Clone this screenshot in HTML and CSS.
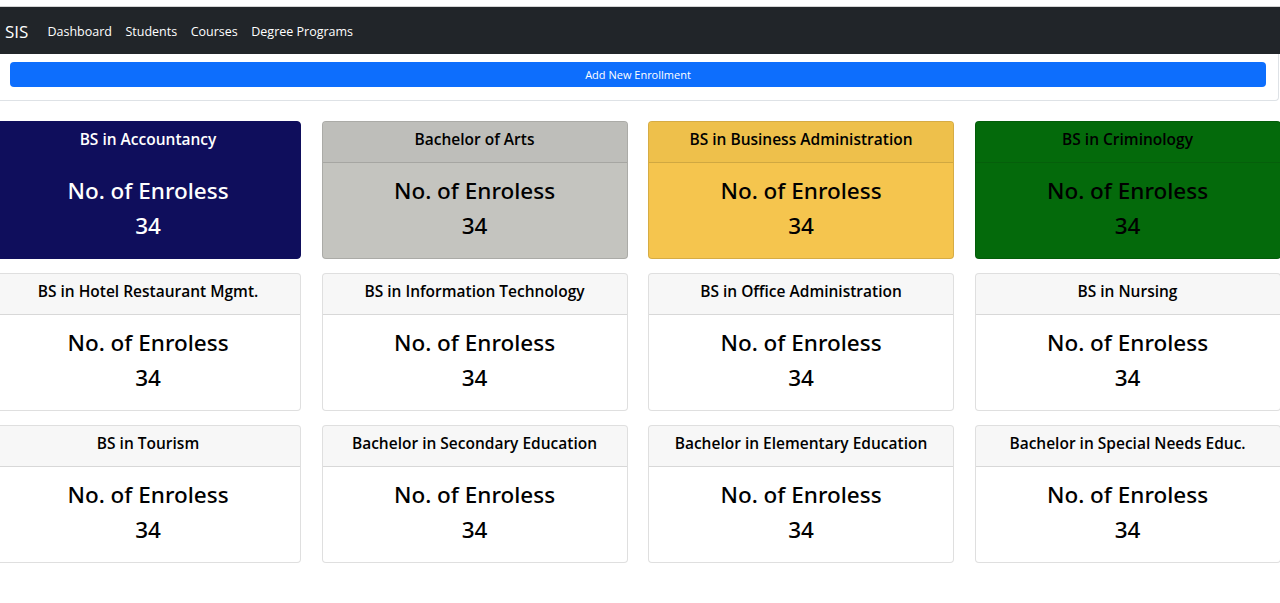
FILE: index.html
```html
<!DOCTYPE html>
<html lang="en">
<head>
<meta charset="utf-8">
<title>SIS</title>
<link rel="stylesheet" href="styles.css">
</head>
<body>
<div class="topstrip"></div>
<nav class="navbar">
  <span class="brand">SIS</span>
  <a class="nav-link" href="#">Dashboard</a>
  <a class="nav-link" href="#">Students</a>
  <a class="nav-link" href="#">Courses</a>
  <a class="nav-link" href="#">Degree Programs</a>
</nav>
<div class="action-card">
  <button class="btn-primary">Add New Enrollment</button>
</div>
<main class="grid">
  <div class="card navy"><div class="card-header">BS in Accountancy</div><div class="card-body"><div class="line">No. of Enroless</div><div class="line">34</div></div></div>
  <div class="card grey"><div class="card-header">Bachelor of Arts</div><div class="card-body"><div class="line">No. of Enroless</div><div class="line">34</div></div></div>
  <div class="card yellow"><div class="card-header">BS in Business Administration</div><div class="card-body"><div class="line">No. of Enroless</div><div class="line">34</div></div></div>
  <div class="card green"><div class="card-header">BS in Criminology</div><div class="card-body"><div class="line">No. of Enroless</div><div class="line">34</div></div></div>
  <div class="card"><div class="card-header">BS in Hotel Restaurant Mgmt.</div><div class="card-body"><div class="line">No. of Enroless</div><div class="line">34</div></div></div>
  <div class="card"><div class="card-header">BS in Information Technology</div><div class="card-body"><div class="line">No. of Enroless</div><div class="line">34</div></div></div>
  <div class="card"><div class="card-header">BS in Office Administration</div><div class="card-body"><div class="line">No. of Enroless</div><div class="line">34</div></div></div>
  <div class="card"><div class="card-header">BS in Nursing</div><div class="card-body"><div class="line">No. of Enroless</div><div class="line">34</div></div></div>
  <div class="card"><div class="card-header">BS in Tourism</div><div class="card-body"><div class="line">No. of Enroless</div><div class="line">34</div></div></div>
  <div class="card"><div class="card-header">Bachelor in Secondary Education</div><div class="card-body"><div class="line">No. of Enroless</div><div class="line">34</div></div></div>
  <div class="card"><div class="card-header">Bachelor in Elementary Education</div><div class="card-body"><div class="line">No. of Enroless</div><div class="line">34</div></div></div>
  <div class="card"><div class="card-header">Bachelor in Special Needs Educ.</div><div class="card-body"><div class="line">No. of Enroless</div><div class="line">34</div></div></div>
</main>
</body>
</html>
```
FILE: styles.css
```css
* { box-sizing: border-box; }
html, body { margin: 0; padding: 0; }
body {
  font-family: "Open Sans", "Noto Sans", sans-serif;
  background: #fff;
  color: #000;
  overflow: hidden;
  width: 1280px;
  height: 603px;
}
.topstrip {
  height: 7px;
  background: #fff;
  border-bottom: 1px solid #d4d4d4;
}
.navbar {
  height: 47px;
  background: #212529;
  display: flex;
  align-items: center;
  padding: 2px 0 0 5px;
}
.brand {
  color: #fff;
  font-size: 17px;
  margin-right: 19px;
}
.nav-link {
  color: #fff;
  font-size: 12.5px;
  text-decoration: none;
  margin-right: 13.5px;
}
.action-card {
  margin-left: -4px;
  width: 1283px;
  height: 47px;
  background: #fff;
  border: 1px solid #dee2e6;
  border-top: none;
  border-radius: 0 0 4px 4px;
  padding: 8px 12px 13px 13px;
}
.btn-primary {
  display: block;
  width: 100%;
  height: 25px;
  background: #0d6efd;
  border: none;
  border-radius: 4px;
  color: #fff;
  font-family: inherit;
  font-size: 11px;
  padding: 0;
}
.grid {
  display: grid;
  grid-template-columns: repeat(4, 306px);
  column-gap: 20.5px;
  row-gap: 14px;
  margin-left: -5px;
  margin-top: 20px;
}
.card {
  height: 138px;
  border: 1px solid rgba(0,0,0,.125);
  border-radius: 4px;
  overflow: hidden;
  text-align: center;
  background: #fff;
}
.card-header {
  height: 41px;
  font-size: 15.5px;
  font-weight: 600;
  line-height: 35px;
  background: rgba(0,0,0,.03);
  border-bottom: 1px solid rgba(0,0,0,.125);
  color: #000;
}
.card-body {
  padding-top: 10px;
}
.line {
  font-family: "Noto Sans", "Open Sans", sans-serif;
  font-size: 22.5px;
  font-weight: 500;
  line-height: 35px;
}
.navy { background: #0f0e5c; color: #fff; border-color: #0f0e5c; }
.navy .card-header { color: #fff; background: #0f0e5c; border-bottom-color: #0f0e5c; }
.grey { background: #c4c4bf; }
.grey .card-header { background: #bebeba; }
.yellow { background: #f5c54e; }
.yellow .card-header { background: #eec04b; }
.green { background: #046a0b; }
.green .card-header { background: #046a0b; border-bottom-color: #055f0b; }
```
